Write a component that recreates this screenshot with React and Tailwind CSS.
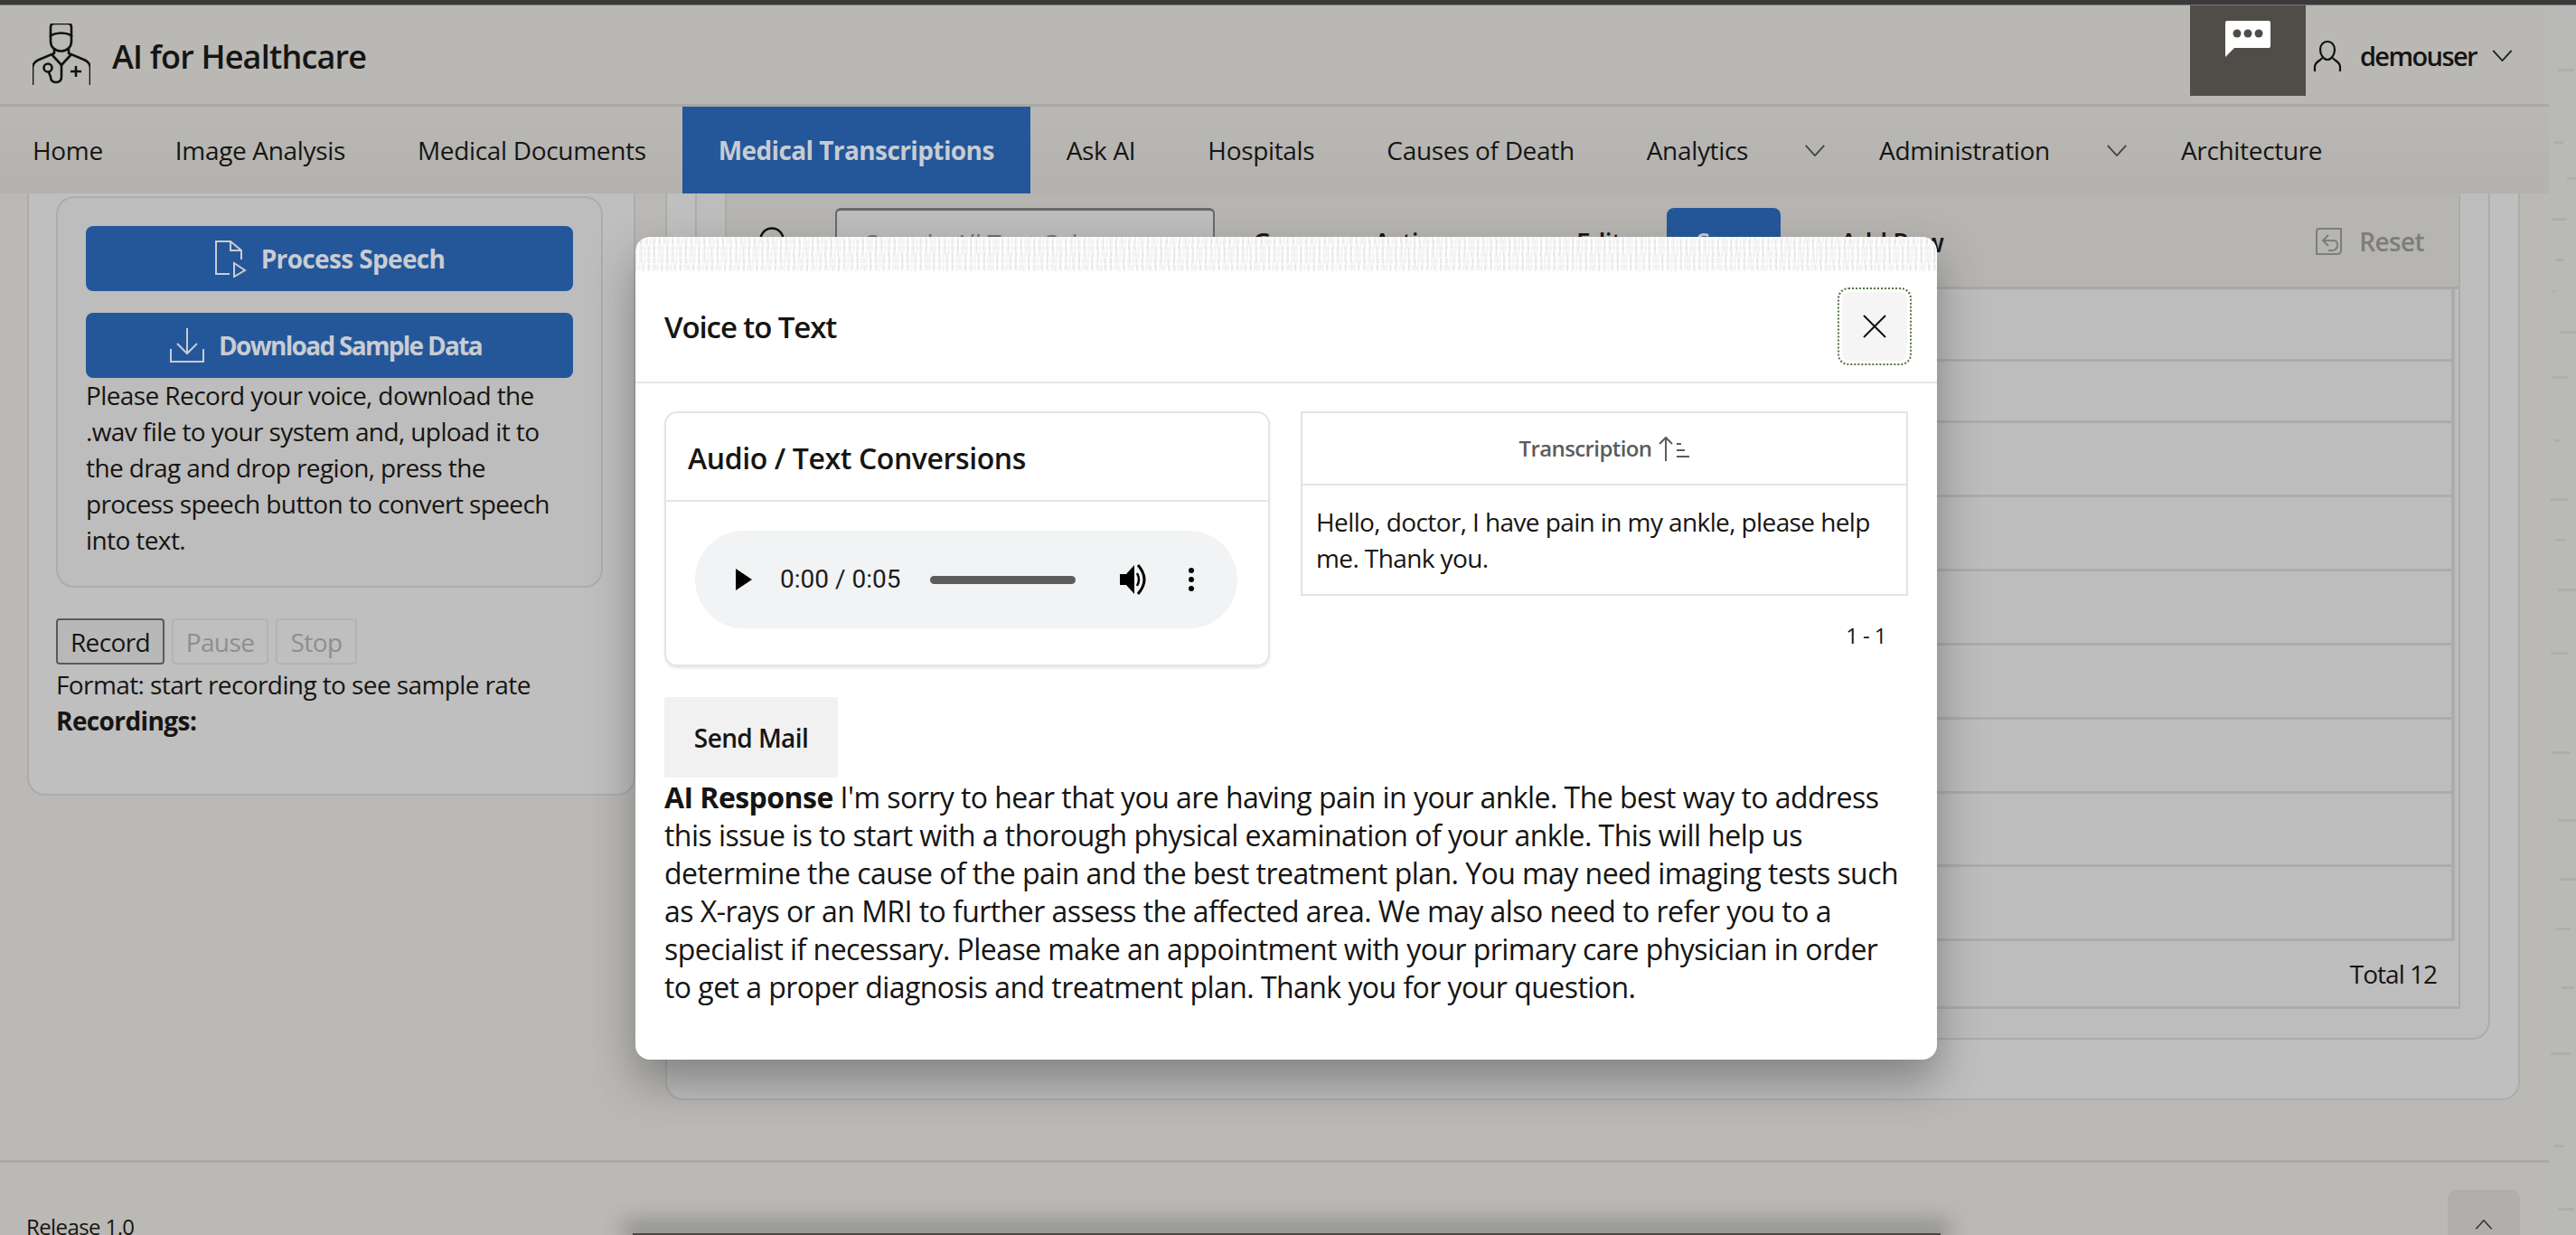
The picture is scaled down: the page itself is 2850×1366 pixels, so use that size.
import React from 'react';

const navItems = [
  { label: 'Home', cls: 'pl-[36px] pr-10' },
  { label: 'Image Analysis', cls: 'px-10' },
  { label: 'Medical Documents', cls: 'px-10' },
  { label: 'Medical Transcriptions', cls: 'px-10', active: true },
  { label: 'Ask AI', cls: 'px-10' },
  { label: 'Hospitals', cls: 'px-10' },
  { label: 'Causes of Death', cls: 'px-10' },
  { label: 'Analytics', cls: 'pl-10 pr-[19px]', chevron: true },
  { label: 'Administration', cls: 'pl-10 pr-[19px]', chevron: true },
  { label: 'Architecture', cls: 'px-10' },
];

const gridRows = [80, 68, 82, 82, 82, 82, 82, 81, 82];

const aiLines =
  "I'm sorry to hear that you are having pain in your ankle. The best way to address this issue is to start with a thorough physical examination of your ankle. This will help us determine the cause of the pain and the best treatment plan. You may need imaging tests such as X-rays or an MRI to further assess the affected area. We may also need to refer you to a specialist if necessary. Please make an appointment with your primary care physician in order to get a proper diagnosis and treatment plan. Thank you for your question.";

// marks along the right edge of the page
const stripMarks = [
  [70, 18, 8], [150, 10, 4], [190, 14, 18], [235, 16, 2], [280, 8, 6], [315, 4, 2], [360, 20, 10],
  [410, 18, 2], [480, 6, 4], [545, 20, 0], [590, 10, 6], [645, 22, 8], [715, 20, 0], [825, 20, 2],
  [900, 22, 8], [965, 20, 10], [1020, 16, 6], [1085, 14, 12], [1158, 22, 0], [1260, 10, 4], [1330, 18, 8],
];

const Chevron = ({ className }) => (
  <svg className={className} viewBox="0 0 24 14" fill="none" stroke="currentColor" strokeWidth="2">
    <path d="M1 1l11 12L23 1" />
  </svg>
);

const DoctorLogo = () => (
  <svg width="64" height="70" viewBox="16 13 64 70" fill="none" stroke="#111" strokeWidth="2.6">
    <path d="M36 28V17q0-4 4-4h15q4 0 4 4v11" />
    <path d="M36 26q12-5 23 0" />
    <path d="M36 26v7c0 6 5 10.500 11.500 10.500S59 39 59 33v-7" />
    <path d="M40 41v5l-18 7.500q-6 3-6 9V81" />
    <path d="M56 41v5l18 7.500q6 3 6 9V81" />
    <path d="M37 47l11 12 11-12" />
    <path d="M48 59v13q0 6-6 6t-6-6l-2-5" />
    <circle cx="33" cy="62" r="4.500" />
    <path d="M58 66h12M64 60v12" />
  </svg>
);

const ProcessIcon = () => (
  <svg width="36" height="42" viewBox="0 0 36 42" fill="none" stroke="#c9ccd2" strokeWidth="2">
    <path d="M17 38H2V2h16l12 10v10" />
    <path d="M18 2v10h12" />
    <path d="M22 26l12 8-12 7z" />
  </svg>
);

const DownloadIcon = () => (
  <svg width="38" height="40" viewBox="0 0 38 40" fill="none" stroke="#c9ccd2" strokeWidth="2">
    <path d="M19 1v28M8 18l11 11 11-11" />
    <path d="M1 24v14h36V24" />
  </svg>
);

const App = () => {
  return (
    <div className="relative flex h-[1366px] w-[2850px] flex-col overflow-hidden bg-[#bab9b6] font-['Open_Sans',sans-serif] tracking-[-0.6px] text-[#161513]">
      <div className="h-[6px] shrink-0 border-b border-[#777] bg-[#3a3a3a]" />

      <div className="flex min-h-0 flex-1">
        <div className="flex w-[2820px] shrink-0 flex-col">
          {/* Header */}
          <header className="flex h-[112px] shrink-0 items-start border-b-[3px] border-[#a9a8a5] bg-[#b9b8b5]">
            <div className="ml-[36px] mt-[20px] flex items-center gap-[24px]">
              <DoctorLogo />
              <span className="relative top-[2px] text-[36px] font-semibold tracking-[-0.8px]">AI for Healthcare</span>
            </div>
            <div className="ml-auto flex h-[100px] items-start">
              <div className="flex h-[100px] w-[128px] justify-center bg-[#504d48] pt-[17px]">
                <svg width="50" height="40" viewBox="0 0 50 40" fill="#fff">
                  <path d="M2 0h46a2 2 0 012 2v26a2 2 0 01-2 2H10L0 40V2a2 2 0 012-2z" />
                  <circle cx="13" cy="14" r="4.500" fill="#504d48" />
                  <circle cx="25" cy="14" r="4.500" fill="#504d48" />
                  <circle cx="37" cy="14" r="4.500" fill="#504d48" />
                </svg>
              </div>
              <div className="ml-[8px] mt-[34px] flex items-center pr-[40px]">
                <svg width="32" height="36" viewBox="0 0 32 36" fill="none" stroke="#111" strokeWidth="2.200">
                  <path d="M16 2c-5 0-8 4-8 9 0 6 4 11 8 11s8-5 8-11c0-5-3-9-8-9z" />
                  <path d="M10 20c-1 3-8 4-8 10v5M22 20c1 3 8 4 8 10v5" />
                </svg>
                <span className="ml-[20px] text-[29px] font-semibold tracking-[-1.6px]">demouser</span>
                <Chevron className="ml-[17px] h-[13px] w-[23px] text-[#222]" />
              </div>
            </div>
          </header>

          {/* Main navigation */}
          <nav className="flex h-[96px] shrink-0 items-stretch bg-gradient-to-b from-[#b9b8b5] to-[#b3b2af] text-[28px] tracking-[-0.33px]">
            {navItems.map((item) => (
              <div
                key={item.label}
                className={`flex items-center ${item.cls} ${item.active ? 'bg-[#24579a] font-bold tracking-[-0.6px] text-[#c7ccd3]' : ''}`}
              >
                {item.label}
                {item.chevron && <Chevron className="ml-[62px] h-[13px] w-[24px] text-[#444]" />}
              </div>
            ))}
          </nav>

          {/* Page content, scrolled under the bars */}
          <main className="flex min-h-0 flex-1 gap-[33px] overflow-hidden pl-[30px]">
            <section className="h-[666px] w-[673px] shrink-0 rounded-b-[20px] border-x-2 border-b-2 border-[#adacab] bg-[#bfbfbf] pl-[30px] pt-[3px]">
              <div className="w-[605px] rounded-[20px] border-2 border-[#adadad] bg-[#bdbdbd] px-[31px] pb-[31px] pt-[31px]">
                <button className="flex h-[72px] w-full items-center justify-center gap-[16px] rounded-[8px] bg-[#24579a] text-[28px] font-bold tracking-[-0.65px] text-[#c9ccd2]">
                  <ProcessIcon />
                  Process Speech
                </button>
                <button className="mt-[24px] flex h-[72px] w-full items-center justify-center gap-[16px] rounded-[8px] bg-[#24579a] pr-[8px] text-[28px] font-bold tracking-[-1.7px] text-[#c9ccd2]">
                  <DownloadIcon />
                  Download Sample Data
                </button>
                <p className="mt-[-1px] text-[28px] leading-[40px]">
                  Please Record your voice, download the .wav file to your system and, upload it to the drag and drop region, press the process speech button to convert speech into text.
                </p>
              </div>
              <div className="mt-[34px] flex gap-[8px] text-[28px]">
                <div className="flex h-[51px] w-[120px] items-center justify-center rounded-[4px] border-2 border-[#5a5a5a] bg-[#b8b8b8]">Record</div>
                <div className="flex h-[51px] w-[107px] items-center justify-center rounded-[4px] border-2 border-[#b3b3b3] text-[#8e8e8e]">Pause</div>
                <div className="flex h-[51px] w-[90px] items-center justify-center rounded-[4px] border-2 border-[#b3b3b3] text-[#8e8e8e]">Stop</div>
              </div>
              <p className="mt-[2px] text-[28px] leading-[40px]">Format: start recording to see sample rate</p>
              <p className="text-[28px] font-bold leading-[40px]">Recordings:</p>
            </section>

            <section className="h-[1003px] w-[2052px] shrink-0 rounded-b-[20px] border-x-2 border-b-2 border-[#adacab] bg-[#bfbfbf] pl-[31px]">
              <div className="h-[936px] w-[1986px] rounded-b-[20px] border-x-2 border-b-2 border-[#adacab] bg-[#bdbdbd] pl-[31px]">
                <div className="flex h-[902px] w-[1920px] flex-col border-l-2 border-r-[2px] border-b-[3px] border-[#adacab]">
                  <div className="flex h-[106px] shrink-0 items-start border-b-[3px] border-[#a9a8a5] bg-[#b6b5b2] pt-[16px] text-[28px] font-semibold">
                    <div className="flex h-[76px] items-center">
                      <svg className="ml-[36px]" width="34" height="34" viewBox="0 0 34 34" fill="none" stroke="#111" strokeWidth="2.500">
                        <circle cx="14" cy="14" r="12.500" />
                        <path d="M23 23l10 10" />
                      </svg>
                      <div className="ml-[50px] flex h-[76px] w-[420px] items-center rounded-[6px] border-2 border-t-[3px] border-[#6b6a68] bg-[#bdbdbd] pl-[31px] font-normal text-[#6f6f6f]">
                        Search: All Text Columns
                      </div>
                      <span className="ml-[42px] w-[134px]">Go</span>
                      <span className="w-[224px]">Actions</span>
                      <span className="w-[100px]">Edit</span>
                      <div className="flex h-[76px] w-[126px] items-center justify-center rounded-[8px] bg-[#24579a] text-[#c7ccd3]">Save</div>
                      <span className="ml-[66px]">Add Row</span>
                    </div>
                    <div className="ml-auto mr-[38px] flex h-[74px] items-center gap-[18px] text-[#7d7d7b]">
                      <svg width="30" height="30" viewBox="0 0 30 30" fill="none" stroke="#7d7d7b" strokeWidth="2">
                        <path d="M4 1h24v24q0 4-4 4H1V4q0-3 3-3z" />
                        <path d="M14 8l-6 6 6 6M8 14h12q4 0 4 5t-5 6h-5" />
                      </svg>
                      Reset
                    </div>
                  </div>
                  <div className="mr-[4px] shrink-0 border-r-[4px] border-[#adacab]">
                    {gridRows.map((h, i) => (
                      <div key={i} style={{ height: h }} className="border-b-[3px] border-[#adacab]" />
                    ))}
                  </div>
                  <div className="flex flex-1 items-center justify-end pr-[24px] text-[28px] tracking-[-1px]">Total 12</div>
                </div>
              </div>
            </section>
          </main>

          {/* Footer */}
          <footer className="relative h-[83px] shrink-0 border-t-[3px] border-[#a9a8a5] bg-[#bab9b6]">
            <div className="pl-[29px] pt-[56px] text-[24px] leading-[30px]">Release 1.0</div>
          </footer>
        </div>

        {/* Edge strip */}
        <div className="relative w-[30px] shrink-0 bg-[#b9b9b7]">
          {stripMarks.map(([y, w, x], i) => (
            <div key={i} style={{ top: y, width: w, left: x + 2 }} className="absolute h-[3px] bg-[#aeaeac]" />
          ))}
        </div>
      </div>

      {/* Back to top tab */}
      <div className="absolute left-[2708px] top-[1316px] flex h-[50px] w-[80px] items-end justify-center rounded-t-[10px] bg-[#b0afad] pb-[6px]">
        <Chevron className="h-[11px] w-[20px] rotate-180 text-[#333]" />
      </div>

      {/* Dark bar at the bottom of the page */}
      <div className="absolute left-[700px] top-[1364px] h-[2px] w-[1447px] bg-[#4a4843] shadow-[0_-4px_22px_10px_rgba(60,60,60,0.35)]" />

      {/* Voice to Text dialog */}
      <div className="absolute left-[703px] top-[262px] h-[910px] w-[1440px] overflow-hidden rounded-[16px] bg-white shadow-[0_24px_50px_rgba(40,40,40,0.4)]">
        <div className="h-[38px] bg-[repeating-linear-gradient(0deg,rgba(255,255,255,0.4)_0px,rgba(255,255,255,0.4)_2px,transparent_2px,transparent_7px),repeating-linear-gradient(87deg,rgba(0,0,0,0.05)_0px,rgba(0,0,0,0.05)_2px,transparent_2px,transparent_7px),repeating-linear-gradient(93deg,rgba(0,0,0,0.045)_0px,rgba(0,0,0,0.045)_3px,transparent_3px,transparent_5px)]" />
        <div className="flex h-[124px] items-center justify-between border-b-[2px] border-[#e5e5e5] pl-[32px] pr-[28px]">
          <h2 className="relative top-[1px] text-[33px] font-semibold tracking-[-1.1px] text-[#161513]">Voice to Text</h2>
          <div className="rounded-[12px] border-2 border-dotted border-[#55734a] p-[3px]">
            <button className="flex h-[76px] w-[72px] items-center justify-center rounded-[8px] bg-[#f5f5f5]">
              <svg width="26" height="26" viewBox="0 0 26 26" fill="none" stroke="#111" strokeWidth="2">
                <path d="M1 1l24 24M25 1L1 25" />
              </svg>
            </button>
          </div>
        </div>

        <div className="px-[32px] pt-[31px]">
          <div className="flex items-start gap-[34px]">
            <div className="h-[282px] w-[670px] shrink-0 rounded-[14px] border-2 border-[#e5e5e5] shadow-[0_2px_3px_rgba(0,0,0,0.1)]">
              <div className="flex h-[98px] items-center border-b-2 border-[#e5e5e5] pl-[24px] text-[32px] font-semibold tracking-[-0.4px]">
                <span className="relative top-[2px]">Audio / Text Conversions</span>
              </div>
              <div className="ml-[32px] mt-[32px] flex h-[108px] w-[600px] items-center rounded-[54px] bg-[#f1f3f4] font-['Roboto',sans-serif] text-[28px] tracking-normal text-[#1c1c1c]">
                <svg className="ml-[45px]" width="18" height="24" viewBox="0 0 18 24" fill="#000">
                  <path d="M0 0l18 12L0 24z" />
                </svg>
                <span className="ml-[31px]">0:00 / 0:05</span>
                <div className="ml-[33px] h-[9px] w-[161px] rounded-full bg-[#5c5c5c]" />
                <svg className="ml-[49px]" width="32" height="36" viewBox="0 0 32 36" fill="none">
                  <path d="M0 12h7L16 2v32l-9-10H0z" fill="#000" />
                  <path d="M19 11q4 7 0 14" stroke="#000" strokeWidth="2.500" />
                  <path d="M20 2q14 16 0 32" stroke="#000" strokeWidth="3" />
                </svg>
                <svg className="ml-[43px]" width="8" height="26" viewBox="0 0 8 26" fill="#000">
                  <circle cx="4" cy="3" r="3" />
                  <circle cx="4" cy="13" r="3" />
                  <circle cx="4" cy="23" r="3" />
                </svg>
              </div>
            </div>

            <div className="flex-1">
              <div className="border-2 border-[#e3e3e3]">
                <div className="flex h-[80px] items-center justify-center gap-[8px] border-b-2 border-[#e3e3e3] text-[24px] font-semibold text-[#5c5c5c]">
                  Transcription
                  <svg width="34" height="28" viewBox="0 0 34 28" fill="none" stroke="#5c5c5c" strokeWidth="2">
                    <path d="M8 28V2M1 9l7-7 7 7" />
                    <path d="M20 9h5M20 16h9M20 23h14" />
                  </svg>
                </div>
                <div className="px-[15px] pb-[20px] pt-[20px] text-[28px] leading-[40px]">
                  Hello, doctor, I have pain in my ankle, please help me. Thank you.
                </div>
              </div>
              <div className="mt-[27px] pr-[24px] text-right text-[24px] leading-[34px]">1 - 1</div>
            </div>
          </div>

          <button className="mt-[34px] block h-[89px] w-[192px] rounded-[2px] bg-[#f1f1f1] text-[28px] font-semibold">Send Mail</button>
          <p className="mt-[1px] w-[1372px] text-[32px] leading-[42px] tracking-[-0.55px]">
            <strong className="font-bold">AI Response</strong> {aiLines}
          </p>
        </div>
      </div>
    </div>
  );
};

export default App;
